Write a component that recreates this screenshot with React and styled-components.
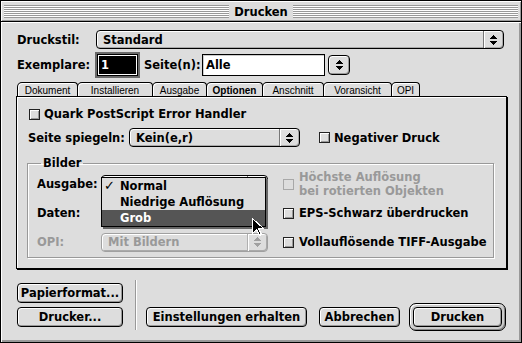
import styled, { createGlobalStyle } from 'styled-components'

const GlobalStyle = createGlobalStyle`
  html, body {
    margin: 0;
    padding: 0;
    background: #dddddd;
  }
  body {
    font-family: "DejaVu Sans", "Liberation Sans", sans-serif;
  }
`

const chicago = `
  font-family: "DejaVu Sans", "Liberation Sans", sans-serif;
  font-weight: bold;
  font-size: 11.5px;
`

const UpDown = ({ color = '#000' }) => (
  <svg width="7" height="10" viewBox="0 0 7 10" shapeRendering="crispEdges">
    <path
      fill={color}
      d="M3 0H4V1H5V2H6V3H7V4H0V3H1V2H2V1H3Z M0 6H7V7H6V8H5V9H4V10H3V9H2V8H1V7H0Z"
    />
  </svg>
)

const Arrow = () => (
  <svg width="13" height="19" viewBox="0 0 13 19" shapeRendering="crispEdges">
    <path
      d="M0.5 0.5V15.5L4.5 11.5L7.5 17.5L9.5 16.5L6.5 10.5H11.5Z"
      fill="#000"
      stroke="#fff"
      strokeWidth="1"
    />
  </svg>
)

export default function App() {
  return (
    <>
      <GlobalStyle />
      <Window>
        <TitleBar>
          <Stripes />
          <Title>Drucken</Title>
          <Stripes />
        </TitleBar>
        <Body>
          <TopRow>
            <Label $w={80}>Druckstil:</Label>
            <Popup $grow>
              <PopupText>Standard</PopupText>
              <PopupArrow><UpDown /></PopupArrow>
            </Popup>
          </TopRow>

          <SecondRow>
            <Label $w={81}>Exemplare:</Label>
            <FocusField>
              <Selected>1</Selected>
            </FocusField>
            <Label $w={59} $ml={5}>Seite(n):</Label>
            <TextField>Alle</TextField>
            <ArrowButton><UpDown /></ArrowButton>
          </SecondRow>

          <Tabs>
            <Tab $w={61}>Dokument</Tab>
            <Tab $w={76}>Installieren</Tab>
            <Tab $w={55}>Ausgabe</Tab>
            <Tab $w={57} $active>Optionen</Tab>
            <Tab $w={62}>Anschnitt</Tab>
            <Tab $w={69}>Voransicht</Tab>
            <Tab $w={29}>OPI</Tab>
          </Tabs>

          <Panel>
            <CheckLine $ml={2}>
              <Box />
              <span>Quark PostScript Error Handler</span>
            </CheckLine>

            <MirrorRow>
              <Label $w={102}>Seite spiegeln:</Label>
              <Popup $w={171}>
                <PopupText>Kein(e,r)</PopupText>
                <PopupArrow><UpDown /></PopupArrow>
              </Popup>
              <CheckLine $ml={19}>
                <Box />
                <span>Negativer Druck</span>
              </CheckLine>
            </MirrorRow>

            <Group>
              <Legend>Bilder</Legend>
              <GroupGrid>
                <Label>Ausgabe:</Label>
                <MenuAnchor>
                  <Popup $w={167}>
                    <PopupText>Normal</PopupText>
                    <PopupArrow><UpDown /></PopupArrow>
                  </Popup>
                  <Menu>
                    <MenuItem><Check>✓</Check>Normal</MenuItem>
                    <MenuItem><Check />Niedrige Auflösung</MenuItem>
                    <MenuItem $hi><Check />Grob</MenuItem>
                    <Cursor><Arrow /></Cursor>
                  </Menu>
                </MenuAnchor>
                <RightCell>
                  <Box $disabled />
                  <Muted>
                    Höchste Auflösung
                    <br />
                    bei rotierten Objekten
                  </Muted>
                </RightCell>

                <Label>Daten:</Label>
                <Popup $w={167}>
                  <PopupText>Mit Bildern</PopupText>
                  <PopupArrow><UpDown /></PopupArrow>
                </Popup>
                <RightCell>
                  <Box />
                  <span>EPS-Schwarz überdrucken</span>
                </RightCell>

                <Label $disabled>OPI:</Label>
                <Popup $w={167} $disabled>
                  <PopupText>Mit Bildern</PopupText>
                  <PopupArrow $disabled><UpDown color="#a0a0a0" /></PopupArrow>
                </Popup>
                <RightCell>
                  <Box />
                  <span>Vollauflösende TIFF-Ausgabe</span>
                </RightCell>
              </GroupGrid>
            </Group>
          </Panel>

          <Footer>
            <ButtonStack>
              <Button>Papierformat...</Button>
              <Button>Drucker...</Button>
            </ButtonStack>
            <Separator />
            <ActionRow>
              <Button $w={161}>Einstellungen erhalten</Button>
              <Button $w={81} $ml={12}>Abbrechen</Button>
              <DefaultRing>
                <Button $w={89}>Drucken</Button>
              </DefaultRing>
            </ActionRow>
          </Footer>
        </Body>
      </Window>
    </>
  )
}

const Window = styled.div`
  width: 522px;
  height: 343px;
  box-sizing: border-box;
  border: 1px solid #000;
  background: #dddddd;
  display: flex;
  flex-direction: column;
  color: #000;
  ${chicago}
`

const TitleBar = styled.div`
  height: 20px;
  border-bottom: 1px solid #000;
  display: flex;
  align-items: center;
  padding: 0 3px;
  gap: 5px;
  box-shadow: inset 1px 1px 0 #fff, inset -1px -1px 0 #999;
`

const Stripes = styled.div`
  flex: 1;
  height: 13px;
  background: repeating-linear-gradient(
    to bottom,
    #999 0px,
    #999 1px,
    #fff 1px,
    #fff 2px
  );
`

const Title = styled.div`
  font-size: 11.5px;
  padding-top: 1px;
`

const Body = styled.div`
  flex: 1;
  display: flex;
  flex-direction: column;
  padding: 8px 15px 0 15px;
  box-shadow: inset 1px 1px 0 #fff, inset -2px -2px 0 #999;
`

const Label = styled.div`
  width: ${p => (p.$w ? `${p.$w}px` : 'auto')};
  margin-left: ${p => p.$ml || 0}px;
  padding-left: 1px;
  box-sizing: border-box;
  white-space: nowrap;
  color: ${p => (p.$disabled ? '#999' : '#000')};
`

const TopRow = styled.div`
  display: flex;
  align-items: center;
  height: 19px;
`

const Popup = styled.div`
  display: flex;
  align-items: stretch;
  box-sizing: border-box;
  height: 19px;
  width: ${p => (p.$w ? `${p.$w}px` : 'auto')};
  flex: ${p => (p.$grow ? 1 : 'none')};
  margin-right: ${p => (p.$grow ? 2 : 0)}px;
  border: 1px solid ${p => (p.$disabled ? '#a0a0a0' : '#000')};
  border-radius: 4px;
  background: #dddddd;
  color: ${p => (p.$disabled ? '#999' : '#000')};
  box-shadow: inset 1px 1px 0 #fff, inset -1px -1px 0 #aaa;
`

const PopupText = styled.span`
  flex: 1;
  display: flex;
  align-items: center;
  padding-left: 6px;
  white-space: nowrap;
`

const PopupArrow = styled.span`
  width: 19px;
  display: flex;
  align-items: center;
  justify-content: center;
  border-left: 1px solid ${p => (p.$disabled ? '#b0b0b0' : '#777')};
  box-shadow: inset 1px 0 0 #fff;
`

const SecondRow = styled.div`
  display: flex;
  align-items: center;
  height: 22px;
  margin-top: 5px;
`

const FocusField = styled.div`
  width: 41px;
  height: 22px;
  box-sizing: border-box;
  border: 1px solid #000;
  background: #fff;
  padding: 1px;
  box-shadow: 0 0 0 2px #6a6a6a;
  display: flex;
`

const Selected = styled.div`
  flex: 1;
  background: #000;
  color: #fff;
  padding-left: 2px;
  display: flex;
  align-items: center;
`

const TextField = styled.div`
  width: 123px;
  height: 22px;
  box-sizing: border-box;
  border: 1px solid #000;
  background: #fff;
  padding-left: 3px;
  display: flex;
  align-items: center;
  box-shadow: inset 1px 1px 0 #ccc;
`

const ArrowButton = styled.div`
  width: 22px;
  height: 20px;
  margin-left: 3px;
  box-sizing: border-box;
  border: 1px solid #000;
  border-radius: 4px;
  display: flex;
  align-items: center;
  justify-content: center;
  box-shadow: inset 1px 1px 0 #fff, inset -1px -1px 0 #999;
`

const Tabs = styled.div`
  display: flex;
  margin-top: 6px;
  height: 14px;
  padding-left: 1px;
`

const Tab = styled.div`
  width: ${p => p.$w}px;
  margin-right: -1px;
  box-sizing: border-box;
  border: 1px solid #000;
  border-bottom: none;
  border-radius: 5px 4px 0 0;
  box-shadow: inset 1px 1px 0 #fff;
  display: flex;
  align-items: center;
  justify-content: center;
  font-family: "Liberation Sans", Arial, sans-serif;
  font-size: 10px;
  font-weight: ${p => (p.$active ? 'bold' : 'normal')};
  padding-top: 1px;
`

const Panel = styled.div`
  margin-right: -1px;
  border: 1px solid #000;
  box-shadow: 1px 1px 0 #000, inset 1px 1px 0 #fff;
  padding: 11px 12px 10px 10px;
  display: flex;
  flex-direction: column;
`

const CheckLine = styled.div`
  display: flex;
  align-items: center;
  gap: 4px;
  height: 12px;
  margin-left: ${p => p.$ml || 0}px;
  white-space: nowrap;
`

const Box = styled.span`
  width: 11px;
  height: 11px;
  flex: none;
  box-sizing: border-box;
  border: 1px solid ${p => (p.$disabled ? '#a8a8a8' : '#222')};
  background: #dddddd;
  box-shadow: ${p =>
    p.$disabled ? 'none' : 'inset 1px 1px 0 #fff, inset -1px -1px 0 #999'};
`

const MirrorRow = styled.div`
  display: flex;
  align-items: center;
  height: 19px;
  margin-top: 8px;
`

const Group = styled.fieldset`
  margin: 9px 0 0 0;
  min-width: 0;
  border: 1px solid #999;
  box-shadow: 1px 1px 0 #fff, inset 1px 1px 0 #fff;
  padding: 4px 8px 5px 8px;
`

const Legend = styled.legend`
  padding: 0 2px;
  margin-left: 5px;
`

const GroupGrid = styled.div`
  display: grid;
  grid-template-columns: 65px 167px 1fr;
  grid-auto-rows: 20px;
  row-gap: 9px;
  align-items: center;
`

const MenuAnchor = styled.div`
  position: relative;
`

const Menu = styled.div`
  position: absolute;
  top: 2px;
  left: 0;
  width: 165px;
  box-sizing: border-box;
  border: 1px solid #000;
  background: #dddddd;
  box-shadow: 2px 2px 0 #666;
  z-index: 2;
`

const MenuItem = styled.div`
  display: grid;
  grid-template-columns: 18px 1fr;
  align-items: center;
  height: 16px;
  background: ${p => (p.$hi ? '#555555' : 'transparent')};
  color: ${p => (p.$hi ? '#fff' : '#000')};
`

const Check = styled.span`
  padding-left: 2px;
  font-size: 13px;
  line-height: 16px;
`

const Cursor = styled.div`
  position: absolute;
  left: 150px;
  top: 40px;
`

const RightCell = styled.div`
  display: flex;
  align-items: center;
  gap: 5px;
  padding-left: 15px;
  white-space: nowrap;
`

const Muted = styled.span`
  color: #999;
  line-height: 14px;
`

const Footer = styled.div`
  display: flex;
  align-items: center;
  height: 50px;
  margin-top: 11px;
`

const ButtonStack = styled.div`
  display: flex;
  flex-direction: column;
  gap: 4px;
  width: 109px;
  margin-left: 1px;
`

const Button = styled.div`
  width: ${p => (p.$w ? `${p.$w}px` : 'auto')};
  margin-left: ${p => p.$ml || 0}px;
  height: 20px;
  box-sizing: border-box;
  border: 1px solid #000;
  border-radius: 4px;
  background: #dddddd;
  box-shadow: inset 1px 1px 0 #fff, inset -1px -1px 0 #999;
  display: flex;
  align-items: center;
  justify-content: center;
  white-space: nowrap;
`

const Separator = styled.div`
  width: 1px;
  height: 50px;
  background: #999;
  box-shadow: 1px 0 0 #fff;
  margin: 0 10px 0 12px;
`

const ActionRow = styled.div`
  display: flex;
  align-items: center;
  align-self: flex-end;
  margin-bottom: -1px;
`

const DefaultRing = styled.div`
  margin-left: 9px;
  padding: 3px;
  border: 1px solid #000;
  border-radius: 7px;
  background: #cccccc;
  box-shadow: inset 1px 1px 0 #fff, inset -1px -1px 0 #888;
`
